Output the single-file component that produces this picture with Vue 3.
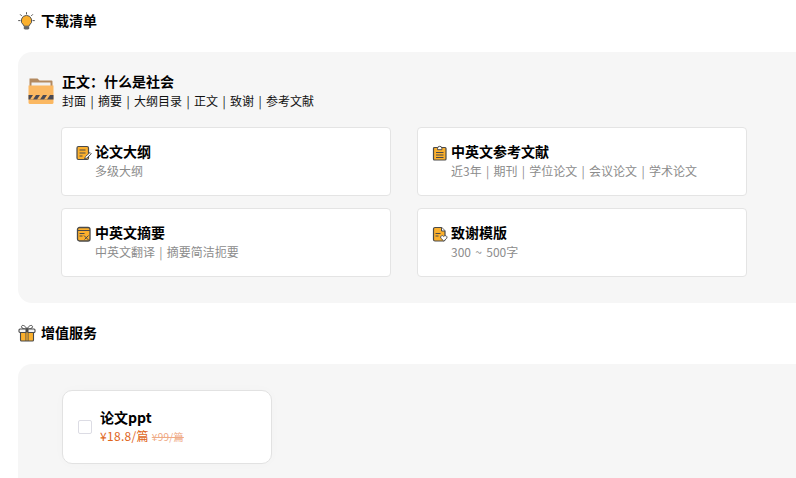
<script setup>
const cards = [
  { icon: 'outline', title: '论文大纲', sub: '多级大纲' },
  { icon: 'refs', title: '中英文参考文献', sub: '近3年 | 期刊 | 学位论文 | 会议论文 | 学术论文' },
  { icon: 'abstract', title: '中英文摘要', sub: '中英文翻译 | 摘要简洁扼要' },
  { icon: 'thanks', title: '致谢模版', sub: '300 ~ 500字' }
]
</script>

<template>
  <div class="page">
    <div class="heading first">
      <svg class="head-icon" viewBox="0 0 18 18" width="18" height="18">
        <g stroke="#555" stroke-width="1" stroke-linecap="round">
          <path d="M8.500 .6v1.400M2.400 2.600l1.100 1.100M14.600 2.600l-1.100 1.100M.6 8.600h1.500M14.900 8.600h1.500" />
        </g>
        <path d="M8.500 3.400a5.300 5.300 0 0 0-3 9.600l.6 1.200h4.800l.6-1.200a5.300 5.300 0 0 0-3-9.600z" fill="#fbb02d" stroke="#555" stroke-width="1" />
        <path d="M5.800 14.200h5.400v2.300l-1 1.100H6.800l-1-1.100z" fill="#666" />
      </svg>
      <span class="heading-text">下载清单</span>
    </div>

    <section class="panel main-panel">
      <div class="doc-row">
        <svg class="folder" viewBox="0 0 26 28" width="26" height="28">
          <path d="M1.500 1.500h8l2 2h12a1 1 0 0 1 1 1V10H1.500z" fill="#b38a60" />
          <rect x="3.500" y="5.500" width="19" height="5" fill="#f1f1f1" />
          <path d="M.5 8.500h25v17a1.500 1.500 0 0 1-1.500 1.500H2A1.500 1.500 0 0 1 .5 25.500z" fill="#fbb862" />
          <rect x=".5" y="18" width="25" height="4.500" fill="#4a4a55" />
          <path d="M2 22.500l3-4.500h3l-3 4.500zM9 22.500l3-4.500h3l-3 4.500zM16 22.500l3-4.500h3l-3 4.500z" fill="#fbb862" />
        </svg>
        <div class="doc-text">
          <div class="doc-title">正文：什么是社会</div>
          <div class="doc-sub">封面 | 摘要 | 大纲目录 | 正文 | 致谢 | 参考文献</div>
        </div>
      </div>

      <div class="card-grid">
        <div v-for="c in cards" :key="c.title" class="card">
          <div class="card-title">
            <svg class="card-icon" viewBox="0 0 16 16" width="16" height="16">
              <template v-if="c.icon === 'outline'">
                <rect x="1" y="1.500" width="11.500" height="13" rx="1.500" fill="#fbb02d" stroke="#4a4a4a" stroke-width="1.200" />
                <path d="M3.500 5h6M3.500 8h6M3.500 11h3" stroke="#4a4a4a" stroke-width="1" />
                <path d="M8.500 14l1-2.500 4.500-4 1.300 1.300-4.500 4.300z" fill="#fff" stroke="#4a4a4a" stroke-width=".9" />
              </template>
              <template v-else-if="c.icon === 'refs'">
                <rect x="1.500" y="2.500" width="12.500" height="12.500" rx="1" fill="#fbb02d" stroke="#4a4a4a" stroke-width="1.200" />
                <path d="M5.500 3.500a2.200 2.200 0 0 1 4.400 0v1.200H5.500z" fill="#fff" stroke="#4a4a4a" stroke-width="1" />
                <path d="M4 7.500h7.500M4 10h7.500M4 12.500h7.500" stroke="#4a4a4a" stroke-width="1" />
              </template>
              <template v-else-if="c.icon === 'abstract'">
                <rect x="1.500" y="1.500" width="12.500" height="13.500" rx="2" fill="#fbb02d" stroke="#4a4a4a" stroke-width="1.300" />
                <path d="M1.500 4.500h12.500" stroke="#4a4a4a" stroke-width="1" />
                <path d="M3.500 7.500h5M3.500 10h3" stroke="#4a4a4a" stroke-width="1" />
                <path d="M8 9.500l4.500 4.500M12.500 9.500l-4 4" stroke="#4a4a4a" stroke-width="1" />
              </template>
              <template v-else>
                <path d="M1.500 3a1.500 1.500 0 0 1 1.500-1.500h6.500l3.500 3.500v8.500a1.500 1.500 0 0 1-1.500 1.500H3A1.500 1.500 0 0 1 1.500 13.500z" fill="#fbb02d" stroke="#4a4a4a" stroke-width="1.200" />
                <path d="M9.500 1.500V5H13" fill="#fff" stroke="#4a4a4a" stroke-width="1" />
                <path d="M3.500 7.500h5M3.500 10h3" stroke="#4a4a4a" stroke-width="1" />
                <path d="M11.800 15l-3-2.800a1.700 1.700 0 0 1 3-1.700 1.700 1.700 0 0 1 3 1.700z" fill="#fff" stroke="#4a4a4a" stroke-width=".9" />
              </template>
            </svg>
            <span>{{ c.title }}</span>
          </div>
          <div class="card-sub">{{ c.sub }}</div>
        </div>
      </div>
    </section>

    <div class="heading second">
      <svg class="head-icon" viewBox="0 0 18 18" width="18" height="18">
        <path d="M9 5C7 1 3.500.5 3.500 2.800 3.500 4.500 6 5 9 5c3 0 5.500-.5 5.500-2.200C14.500.5 11 1 9 5z" fill="#fff" stroke="#4a4a4a" stroke-width="1" />
        <rect x="2.500" y="8" width="13" height="9" rx="1" fill="#fbb02d" stroke="#4a4a4a" stroke-width="1.100" />
        <rect x="1" y="5" width="16" height="3.500" rx="1" fill="#f5f5f5" stroke="#4a4a4a" stroke-width="1.100" />
        <rect x="7.500" y="5" width="3" height="12" fill="#4a4a4a" />
        <rect x="8.300" y="8.500" width="1.400" height="8" fill="#fbb02d" />
      </svg>
      <span class="heading-text">增值服务</span>
    </div>

    <section class="panel extra-panel">
      <div class="service-card">
        <span class="checkbox"></span>
        <div>
          <div class="service-title">论文ppt</div>
          <div class="service-price">
            <span class="now">¥18.8/篇</span>
            <span class="old">¥99/篇</span>
          </div>
        </div>
      </div>
    </section>
  </div>
</template>

<style>
html, body { margin: 0; background: #fff; overflow: hidden; }
</style>

<style scoped>
.page {
  width: 796px;
  height: 478px;
  overflow: hidden;
  background: #fff;
  font-family: "Noto Sans CJK SC", "Noto Sans", sans-serif;
  color: #000;
}
.heading {
  display: flex;
  align-items: center;
  gap: 5px;
  height: 20px;
  margin-left: 18px;
  font-size: 14px;
  font-weight: 700;
  line-height: 20px;
}
.heading-text { margin-bottom: 2px; }
.heading.first { padding-top: 11px; }
.heading.second { margin-top: 20px; }
.head-icon { flex: none; }
.panel {
  width: 820px;
  margin-left: 18px;
  margin-top: 21px;
  box-sizing: border-box;
  background: #f6f6f6;
  border-radius: 14px;
}
.main-panel { height: 251px; padding: 21px 0 0 11px; }
.extra-panel { height: 130px; margin-top: 21px; padding: 26px 0 0 44px; }
.doc-row { display: flex; align-items: flex-start; gap: 8px; height: 54px; }
.folder { flex: none; margin: 4px 0 0 -1px; }
.doc-title { margin-top: -1px; font-size: 14px; font-weight: 700; line-height: 18px; }
.doc-sub { margin-top: 2px; font-size: 12px; line-height: 18px; word-spacing: 1.700px; color: #111; }
.card-grid {
  display: grid;
  grid-template-columns: 330px 330px;
  column-gap: 26px;
  row-gap: 12px;
  margin-left: 32px;
}
.card {
  box-sizing: border-box;
  height: 69px;
  padding: 13px 0 0 14px;
  background: #fff;
  border: 1px solid #e4e4e4;
  border-radius: 4px;
}
.card-title {
  display: flex;
  align-items: center;
  gap: 3px;
  font-size: 14px;
  font-weight: 700;
  line-height: 20px;
}
.card-icon { flex: none; margin: 4px 0 0 0; }
.card-sub {
  margin-left: 19px;
  font-size: 12px;
  line-height: 19px;
  word-spacing: 1.600px;
  color: #8c8c8c;
}
.service-card {
  display: flex;
  align-items: center;
  gap: 8px;
  box-sizing: border-box;
  width: 210px;
  height: 74px;
  padding-left: 15px;
  background: #fff;
  border: 1px solid #e2e2e2;
  border-radius: 10px;
  box-shadow: 0 0 12px rgba(0, 0, 0, 0.02);
}
.checkbox {
  flex: none;
  box-sizing: border-box;
  width: 14px;
  height: 14px;
  background: #fff;
  border: 1px solid #dcdce4;
  border-radius: 2px;
}
.service-title { margin-top: -1px; font-size: 14px; font-weight: 700; line-height: 19px; }
.service-price { display: flex; align-items: baseline; gap: 3px; margin-top: 1px; line-height: 16px; }
.now { font-size: 12px; letter-spacing: 0.300px; color: #e0661c; }
.old { font-size: 10px; letter-spacing: 0.300px; color: #efaa85; text-decoration: line-through; }
</style>
